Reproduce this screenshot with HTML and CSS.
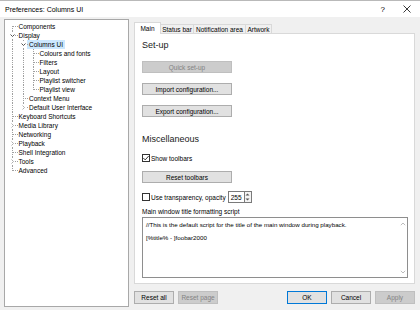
FILE: index.html
```html
<!DOCTYPE html>
<html lang="en">

<head>
    <meta charset="UTF-8">
    <title>Preferences: Columns UI</title>
    <link rel="stylesheet" href="styles.css">
</head>

<body>
    <div class="window">
        <div class="titlebar">
            <span class="title">Preferences: Columns UI</span>
            <span class="help">?</span>
            <svg class="close" width="8" height="8" viewBox="0 0 8 8"><path d="M0.5 0.5L7.5 7.5M7.5 0.5L0.5 7.5" stroke="#222" stroke-width="0.9"/></svg>
        </div>

        <div class="main">
            <!-- tree on the left -->
            <div class="tree">
                <div class="row"><span class="g f"></span><span class="lbl">Components</span></div>
                <div class="row"><span class="g t"><svg class="chev" viewBox="0 0 5 5"><polyline points="0.5,1.5 2.5,3.5 4.5,1.5" class="open"/></svg></span><span class="lbl">Display</span></div>
                <div class="row"><span class="g v"></span><span class="g t"><svg class="chev" viewBox="0 0 5 5"><polyline points="0.5,1.5 2.5,3.5 4.5,1.5" class="open"/></svg></span><span class="lbl sel">Columns UI</span></div>
                <div class="row"><span class="g v"></span><span class="g v"></span><span class="g t"></span><span class="lbl">Colours and fonts</span></div>
                <div class="row"><span class="g v"></span><span class="g v"></span><span class="g t"></span><span class="lbl">Filters</span></div>
                <div class="row"><span class="g v"></span><span class="g v"></span><span class="g t"></span><span class="lbl">Layout</span></div>
                <div class="row"><span class="g v"></span><span class="g v"></span><span class="g t"></span><span class="lbl">Playlist switcher</span></div>
                <div class="row"><span class="g v"></span><span class="g v"></span><span class="g l"></span><span class="lbl">Playlist view</span></div>
                <div class="row"><span class="g v"></span><span class="g t"></span><span class="lbl">Context Menu</span></div>
                <div class="row"><span class="g v"></span><span class="g l"><svg class="chev" viewBox="0 0 5 5"><polyline points="1.5,0.5 3.5,2.5 1.5,4.5" class="shut"/></svg></span><span class="lbl">Default User Interface</span></div>
                <div class="row"><span class="g t"></span><span class="lbl">Keyboard Shortcuts</span></div>
                <div class="row"><span class="g t"><svg class="chev" viewBox="0 0 5 5"><polyline points="1.5,0.5 3.5,2.5 1.5,4.5" class="shut"/></svg></span><span class="lbl">Media Library</span></div>
                <div class="row"><span class="g t"></span><span class="lbl">Networking</span></div>
                <div class="row"><span class="g t"><svg class="chev" viewBox="0 0 5 5"><polyline points="1.5,0.5 3.5,2.5 1.5,4.5" class="shut"/></svg></span><span class="lbl">Playback</span></div>
                <div class="row"><span class="g t"></span><span class="lbl">Shell Integration</span></div>
                <div class="row"><span class="g t"><svg class="chev" viewBox="0 0 5 5"><polyline points="1.5,0.5 3.5,2.5 1.5,4.5" class="shut"/></svg></span><span class="lbl">Tools</span></div>
                <div class="row"><span class="g l"></span><span class="lbl">Advanced</span></div>
            </div>

            <!-- right side: tabs, page, buttons -->
            <div class="side">
                <div class="tabs">
                    <span class="tab active tab-main">Main</span>
                    <span class="tab tab-status">Status bar</span>
                    <span class="tab tab-notify">Notification area</span>
                    <span class="tab tab-art">Artwork</span>
                </div>

                <div class="page">
                    <div class="heading first">Set-up</div>
                    <div class="btn wide disabled quick">Quick set-up</div>
                    <div class="btn wide import">Import configuration...</div>
                    <div class="btn wide export">Export configuration...</div>

                    <div class="heading misc">Miscellaneous</div>
                    <div class="check-row toolbars">
                        <span class="box"><svg viewBox="0 0 8 8" width="8" height="8"><polyline points="1.3,4 3.2,5.9 6.7,2" fill="none" stroke="#222" stroke-width="0.9"/></svg></span>
                        <span>Show toolbars</span>
                    </div>
                    <div class="btn wide reset-tb">Reset toolbars</div>

                    <div class="check-row trans">
                        <span class="box"></span>
                        <span>Use transparency, opacity</span>
                        <span class="spin">
                            <span class="spin-val">255</span>
                            <span class="spin-arrows">
                                <svg viewBox="0 0 5 3" width="5" height="3"><polygon points="0.5,2.6 2.5,0.4 4.5,2.6" fill="#555"/></svg>
                                <svg viewBox="0 0 5 3" width="5" height="3"><polygon points="0.5,0.4 2.5,2.6 4.5,0.4" fill="#555"/></svg>
                            </span>
                        </span>
                    </div>

                    <div class="label">Main window title formatting script</div>
                    <div class="script">
                        <div class="script-text">
                            <p>//This is the default script for the title of the main window during playback.</p>
                            <p class="second">[%title% - ]foobar2000</p>
                        </div>
                        <div class="vscroll">
                            <svg viewBox="0 0 6 4" width="6" height="4"><polyline points="0.8,3.2 3,1 5.2,3.2" fill="none" stroke="#b5b5b5" stroke-width="0.9"/></svg>
                            <svg viewBox="0 0 6 4" width="6" height="4"><polyline points="0.8,0.8 3,3 5.2,0.8" fill="none" stroke="#b5b5b5" stroke-width="0.9"/></svg>
                        </div>
                    </div>
                </div>

                <div class="buttons">
                    <div class="btn small">Reset all</div>
                    <div class="btn small disabled">Reset page</div>
                    <div class="spacer"></div>
                    <div class="btn small default">OK</div>
                    <div class="btn small">Cancel</div>
                    <div class="btn small disabled">Apply</div>
                </div>
            </div>
        </div>
    </div>
</body>

</html>
```

FILE: styles.css
```css
* {
    margin: 0;
    padding: 0;
    box-sizing: border-box;
}

body {
    width: 420px;
    height: 310px;
    overflow: hidden;

    font-family: "Liberation Sans", Arial, sans-serif;
    font-size: 6.5px;
    color: #000;
}

.window {
    width: 420px;
    height: 310px;

    display: flex;
    flex-direction: column;

    background-color: #f0f0f0;
    border-top: solid 1px #b9b9b9;
}

/* title bar */
.titlebar {
    height: 16px;

    display: flex;
    align-items: center;

    background-color: #fff;
    padding-left: 5px;
}

.title {
    flex: 1;
    font-size: 7px;
}

.help {
    font-size: 8px;
    margin-right: 18px;
}

.close {
    margin-right: 9px;
}

.main {
    flex: 1;
    display: flex;
    padding: 2px 4px 3px 4px;
}

/* tree */
.tree {
    width: 125px;
    height: 288px;

    background-color: #fff;
    border: solid 1px #a8a8a8;

    padding: 2px 0 0 2px;
}

.row {
    height: 9px;
    display: flex;
    align-items: center;
}

.g {
    width: 10.5px;
    height: 9px;
    flex: none;

    position: relative;
    display: flex;
    align-items: center;

    padding-left: 3px;
}

.g::before,
.g::after {
    content: "";
    position: absolute;
}

.g.v::before,
.g.t::before,
.g.l::before,
.g.f::before {
    left: 5px;
    top: 0;
    bottom: 0;
    border-left: dotted 1px #a0a0a0;
}

.g.l::before {
    bottom: 4px;
}

.g.f::before {
    top: 4px;
}

.g.t::after,
.g.l::after,
.g.f::after {
    left: 5px;
    right: 0;
    top: 4px;
    border-top: dotted 1px #a0a0a0;
}

.chev {
    width: 5px;
    height: 5px;

    position: relative;
    z-index: 1;

    background-color: #fff;
}

.chev polyline {
    fill: none;
    stroke-width: 0.9;
}

.chev .open {
    stroke: #404040;
}

.chev .shut {
    stroke: #a6a6a6;
}

.lbl {
    padding: 0 1px;
    line-height: 9px;
    white-space: nowrap;
}

.lbl.sel {
    padding: 0 2px;
    margin-left: -1px;
    background-color: #cce8ff;
}

/* right side */
.side {
    width: 281px;
    margin-left: 5px;

    display: flex;
    flex-direction: column;
}

.tabs {
    height: 12px;
    margin-top: 3px;

    display: flex;
    align-items: flex-end;
}

.tab {
    height: 10px;

    display: flex;
    align-items: center;
    justify-content: center;

    border: solid 1px #d9d9d9;
    border-bottom: none;
    margin-left: -1px;

    background-color: #f0f0f0;
}

.tab.active {
    height: 12px;
    margin-left: 0;

    background-color: #fff;
    position: relative;
    z-index: 1;

    align-items: flex-start;
    padding-top: 2px;
}

.tab-main {
    width: 27px;
}

.tab-status {
    width: 34px;
}

.tab-notify {
    width: 53px;
}

.tab-art {
    width: 27px;
}

.page {
    height: 251px;
    margin-top: -1px;

    background-color: #fff;
    border: solid 1px #d9d9d9;

    padding-left: 7px;

    display: flex;
    flex-direction: column;
}

.heading {
    height: 12px;
    line-height: 12px;

    font-size: 9px;
    color: #1a1a1a;
}

.heading.first {
    margin-top: 5px;
}

.heading.misc {
    margin-top: 16px;
}

.btn {
    height: 12px;

    display: flex;
    align-items: center;
    justify-content: center;

    background-color: #e1e1e1;
    border: solid 1px #adadad;
    white-space: nowrap;
}

.btn.wide {
    width: 90px;
}

.btn.disabled {
    background-color: #cccccc;
    border-color: #bfbfbf;
    color: #838383;
}

.quick {
    margin-top: 10px;
}

.import {
    margin-top: 10px;
}

.export {
    margin-top: 10px;
}

.reset-tb {
    margin-top: 8px;
}

.check-row {
    display: flex;
    align-items: center;
    gap: 1px;
}

.box {
    width: 8px;
    height: 8px;

    display: flex;

    background-color: #fff;
    border: solid 1px #333;
}

.box svg {
    margin: -1px;
}

.toolbars {
    height: 10px;
    margin-top: 8px;
}

.trans {
    height: 12px;
    margin-top: 8px;
}

.spin {
    height: 12px;
    margin-left: 1px;

    display: flex;
}

.spin-val {
    width: 16px;

    display: flex;
    align-items: center;

    padding-left: 2px;
    border: solid 1px #7a7a7a;
    border-right: none;
}

.spin-arrows {
    width: 8px;

    display: flex;
    flex-direction: column;
    justify-content: space-around;
    align-items: center;

    border: solid 1px #7a7a7a;
    background-color: #f4f4f4;
}

.label {
    height: 9px;
    line-height: 9px;
    margin-top: 4px;
}

.script {
    width: 266px;
    height: 61px;
    margin-top: 1px;

    display: flex;

    border: solid 1px #8e8e8e;
}

.script-text {
    flex: 1;
    padding: 3px 0 0 3px;
    font-size: 6.2px;
    line-height: 8px;
    white-space: nowrap;
    overflow: hidden;
}

.script-text .second {
    margin-top: 5px;
}

.vscroll {
    width: 9px;

    display: flex;
    flex-direction: column;
    justify-content: space-between;
    align-items: center;

    padding: 4px 0 3px 0;
}

.buttons {
    height: 13px;
    margin-top: 7px;

    display: flex;
    gap: 4px;
}

.btn.small {
    width: 40px;
    height: 13px;
}

.btn.default {
    border-color: #0078d7;
}

.spacer {
    flex: 1;
}
```
